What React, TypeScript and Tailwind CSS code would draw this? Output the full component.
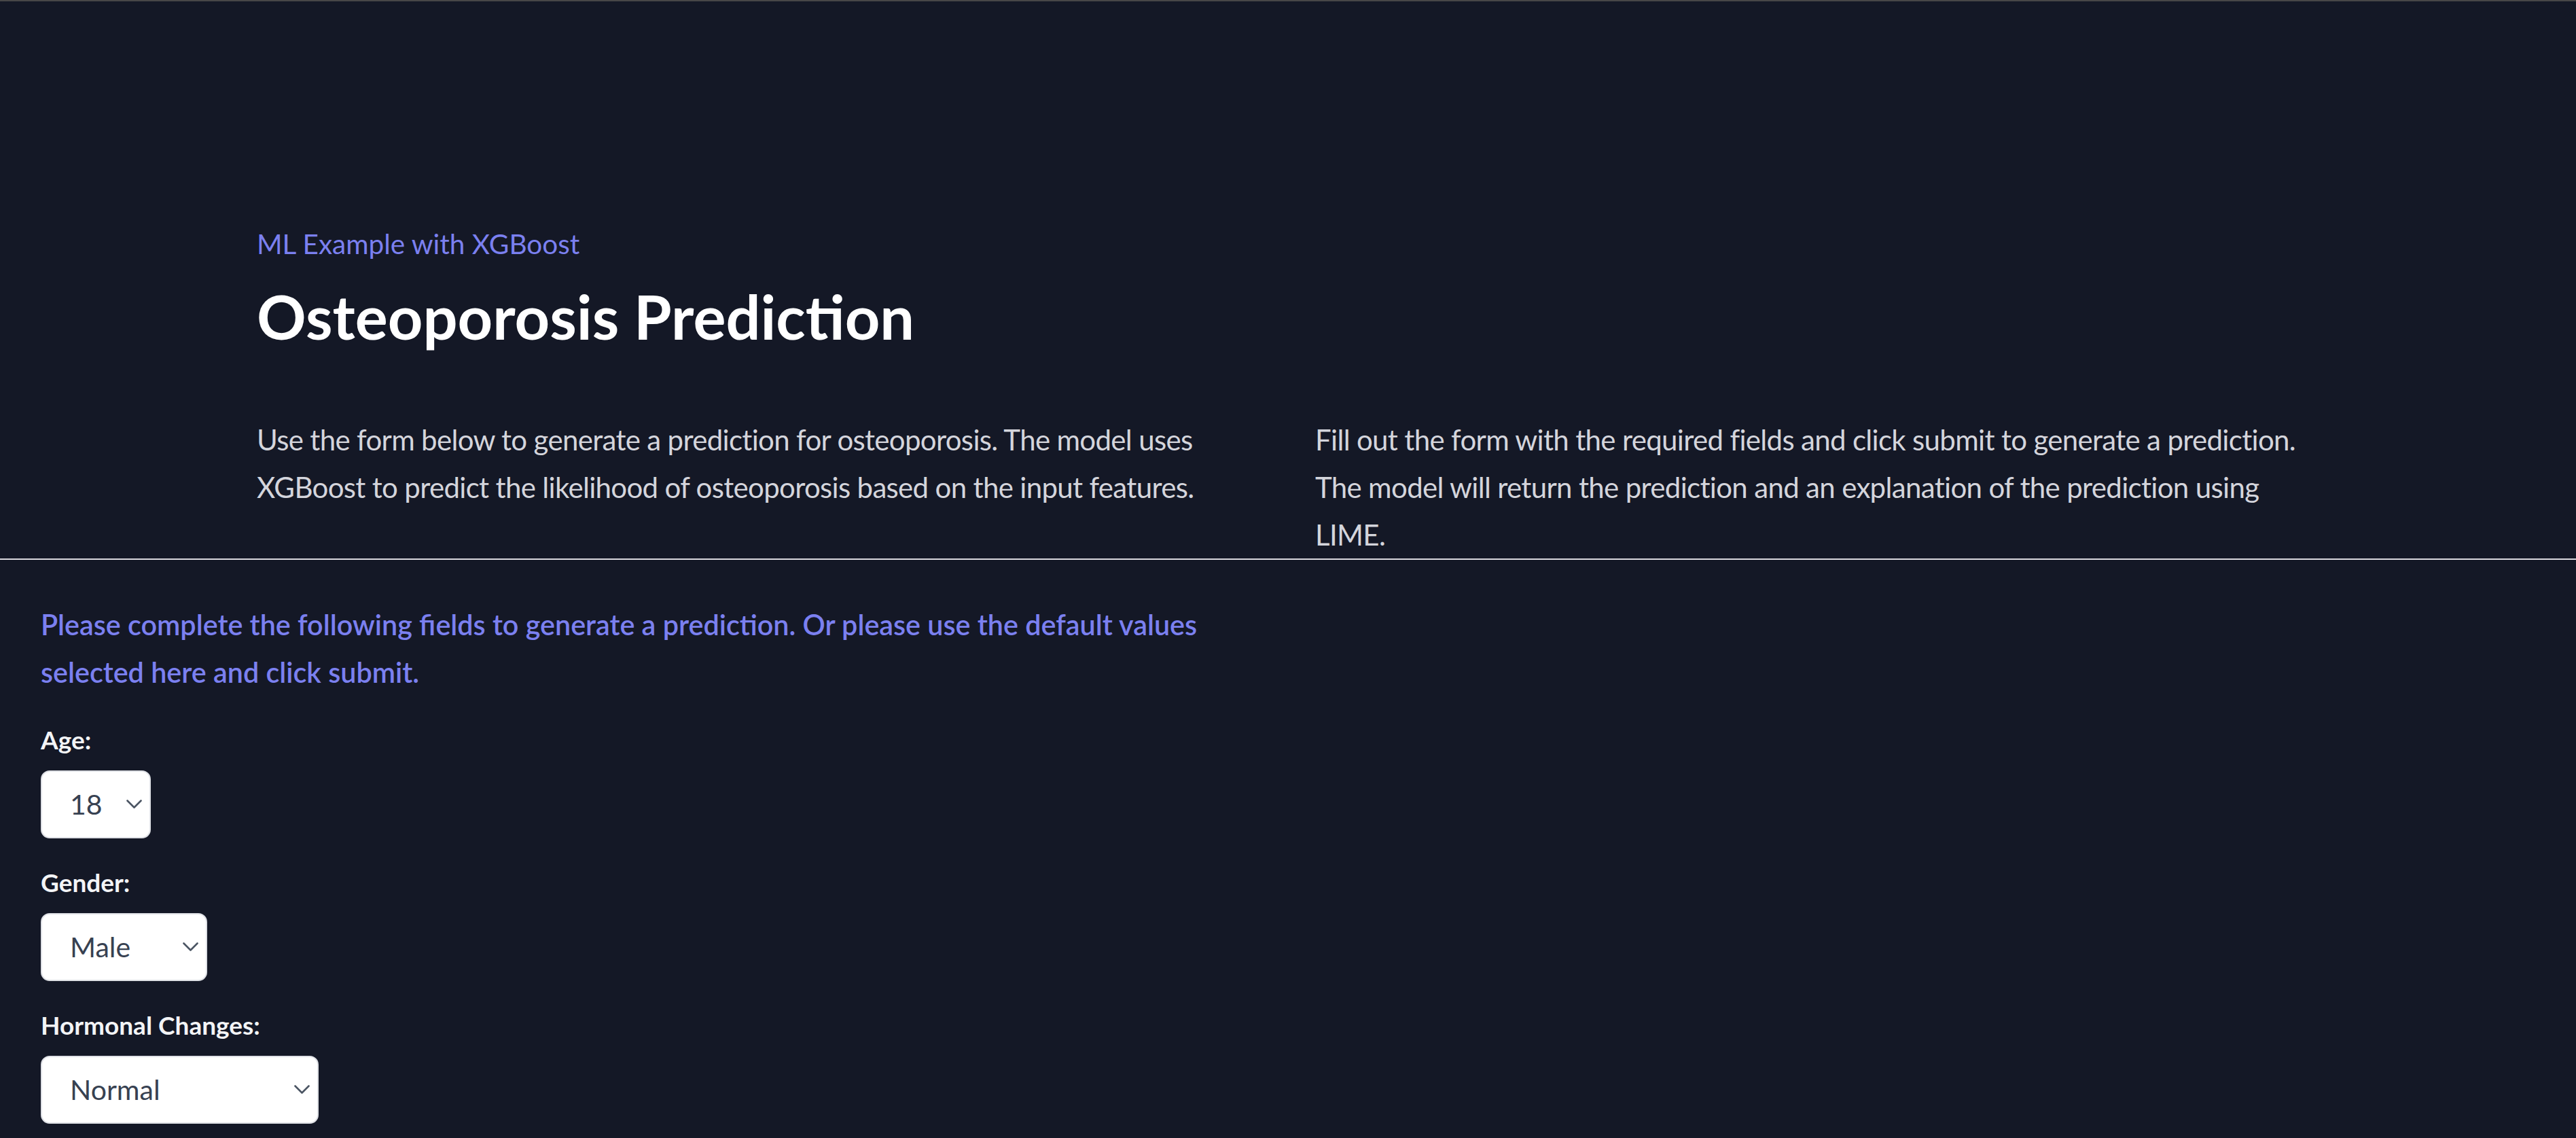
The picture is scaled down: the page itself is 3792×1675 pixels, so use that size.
import { useState } from 'react';

const fieldOptions = {
  age: Array.from({ length: 73 }, (_, i) => String(i + 18)),
  gender: ['Male', 'Female'],
  hormonal: ['Normal', 'Postmenopausal'],
};

function SelectField({
  label,
  value,
  options,
  onChange,
  widthClass,
}: {
  label: string;
  value: string;
  options: string[];
  onChange: (v: string) => void;
  widthClass: string;
}) {
  return (
    <div className="mb-[40px]">
      <label className="block mb-[20px] text-[37px] leading-[50px] font-bold text-[#f3f4f6]">{label}</label>
      <div className={`relative ${widthClass}`}>
        <select
          value={value}
          onChange={(e) => onChange(e.target.value)}
          className="w-full h-[100px] appearance-none bg-white border-2 border-[#dfe1e6] rounded-[13px] pl-[41px] pr-[50px] text-[41px] text-[#374151] outline-none"
        >
          {options.map((o) => (
            <option key={o} value={o}>
              {o}
            </option>
          ))}
        </select>
        <svg
          className="absolute right-[13px] top-[43px] pointer-events-none"
          width="23"
          height="14"
          viewBox="0 0 23 14"
          fill="none"
        >
          <path d="M1.5 1.5 L11.5 11.5 L21.5 1.5" stroke="#4b5563" strokeWidth="2.6" strokeLinecap="round" strokeLinejoin="round" />
        </svg>
      </div>
    </div>
  );
}

export default function App() {
  const [age, setAge] = useState('18');
  const [gender, setGender] = useState('Male');
  const [hormonal, setHormonal] = useState('Normal');

  return (
    <div className="min-h-screen bg-[#141826] border-t-2 border-[#474747] font-['Lato','Noto_Sans',sans-serif]">
      <div className="mx-auto max-w-[3200px] px-[82px] pt-[322px]">
        <p className="text-[40.5px] leading-[70px] text-[#7b80f0]">ML Example with XGBoost</p>
        <h1 className="mt-[21px] text-[90px] leading-[100px] font-bold text-white">Osteoporosis Prediction</h1>
        <div className="mt-[97px] grid grid-cols-2 gap-x-[80px] text-[42px] leading-[70px] tracking-[-0.016em] text-[#d4d5dc]">
          <p>
            Use the form below to generate a prediction for osteoporosis. The model uses XGBoost to predict the likelihood
            of osteoporosis based on the input features.
          </p>
          <p>
            Fill out the form with the required fields and click submit to generate a prediction. The model will return the
            prediction and an explanation of the prediction using LIME.
          </p>
        </div>
      </div>

      <hr className="border-0 border-t-2 border-[#d9d9de]" />

      <form className="p-[60px]" onSubmit={(e) => e.preventDefault()}>
        <p className="mb-[40px] max-w-[1840px] text-[41.3px] leading-[70px] font-semibold text-[#7b80f0]">
          Please complete the following fields to generate a prediction. Or please use the default values selected here
          and click submit.
        </p>
        <SelectField label="Age:" value={age} options={fieldOptions.age} onChange={setAge} widthClass="w-[162px]" />
        <SelectField label="Gender:" value={gender} options={fieldOptions.gender} onChange={setGender} widthClass="w-[245px]" />
        <SelectField
          label="Hormonal Changes:"
          value={hormonal}
          options={fieldOptions.hormonal}
          onChange={setHormonal}
          widthClass="w-[409px]"
        />
      </form>
    </div>
  );
}
